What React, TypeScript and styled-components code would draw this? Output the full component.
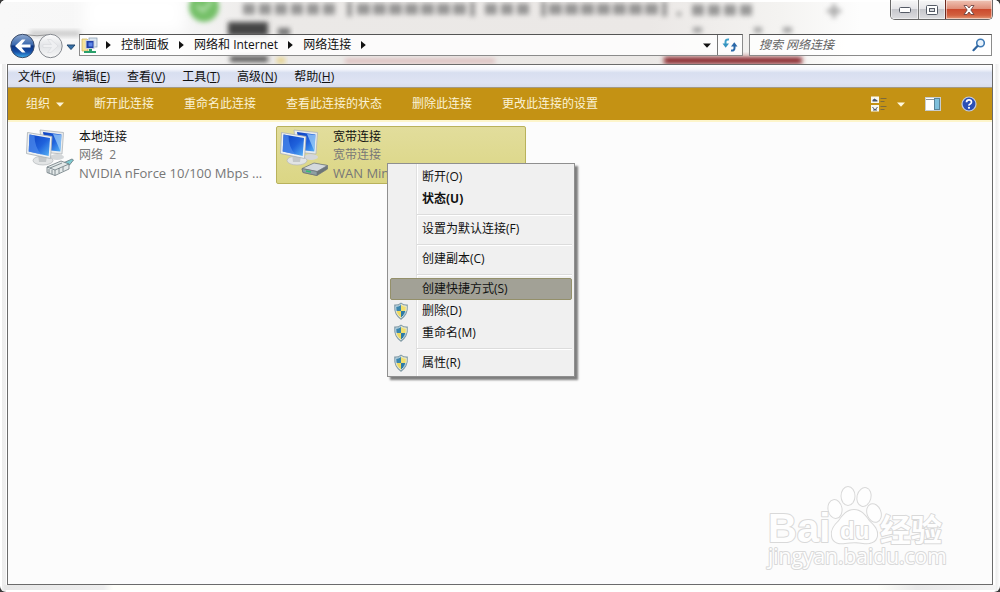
import React from "react";
import styled, { createGlobalStyle, css } from "styled-components";

const Global = createGlobalStyle`
  *, *::before, *::after { box-sizing: border-box; }
  body { margin: 0; background: #3a3a3a; }
  body, button, input {
    font-family: "Open Sans", "Noto Sans CJK SC", sans-serif;
    font-size: 12px;
    line-height: 18px;
    color: #111;
  }
  button { border: 0; padding: 0; background: none; }
  svg { display: block; }
`;

const Window = styled.main`
  position: relative;
  display: flex;
  flex-direction: column;
  min-height: 100vh;
  padding: 0 7px 7px;
  border-radius: 6px;
  overflow: hidden;
  background: linear-gradient(90deg, #fff 2px, #ececec 2px, #f0f0f0 6px, #fff 6px, #fff calc(100% - 5px), #ececec calc(100% - 4px), #fff);
`;

const Glass = styled.svg`
  position: absolute;
  top: 0;
  left: 0;
  width: 100%;
  height: 64px;
`;

const BottomGlass = styled.div`
  position: absolute;
  left: 4px;
  right: 4px;
  bottom: 2px;
  height: 5px;
  background: linear-gradient(90deg, #e8e8e8, #eee 10%, #fffffa 11%, #fffffa 88%, #e9e9e9 92%, #f4f4f4);
`;

const TitleBar = styled.header`
  position: relative;
  display: flex;
  justify-content: flex-end;
  height: 34px;
`;

const CaptionGroup = styled.div`
  display: flex;
  height: 20px;
  border: 1px solid #686868;
  border-top: 0;
  border-radius: 0 0 5px 5px;
  overflow: hidden;
`;

const CaptionButton = styled.button<{ $close?: boolean }>`
  display: grid;
  place-items: center;
  width: ${(p) => (p.$close ? 47 : 27)}px;
  background: linear-gradient(#f7f7f7, #e6e6e9 45%, #c6c7cc 50%, #dddde0);
  border-left: 1px solid #777;
  box-shadow: inset 0 0 0 1px rgba(255, 255, 255, 0.5);
  &:first-child { border-left: 0; }
  ${(p) =>
    p.$close &&
    css`
      background: linear-gradient(#efc4b6, #e08f7a 45%, #cb4a2e 50%, #d2603f 80%, #e69a78);
      border-color: #6d2a20;
    `}
`;

const NavRow = styled.div`
  position: relative;
  display: flex;
  align-items: center;
  height: 22px;
  margin-bottom: 8px;
  padding: 0 1px 0 3px;
`;

const HistoryButtons = styled.div`
  display: flex;
  align-items: center;
  width: 69px;
`;

const AddressBar = styled.div`
  flex: 1;
  display: flex;
  height: 22px;
  background: rgba(255, 255, 255, 0.82);
  border: 1px solid #8b8b8b;
  border-top-color: #555;
`;

const Crumbs = styled.nav`
  flex: 1;
  display: flex;
  align-items: center;
  gap: 10px;
  padding-left: 1px;
`;

const CrumbLink = styled.a`
  color: #111;
  text-decoration: none;
  white-space: nowrap;
`;

const FolderIcon = styled.span`
  margin-right: -2px;
`;

const AddressButton = styled.button<{ $divided?: boolean }>`
  display: grid;
  place-items: center;
  width: ${(p) => (p.$divided ? 25 : 20)}px;
  border-left: ${(p) => (p.$divided ? "1px solid #777" : "0")};
`;

const SearchBox = styled.form`
  display: flex;
  align-items: center;
  width: 243px;
  height: 22px;
  margin-left: 6px;
  padding: 0 5px 0 8px;
  background: rgba(255, 255, 255, 0.82);
  border: 1px solid #8b8b8b;
  border-top-color: #555;
`;

const SearchInput = styled.input`
  flex: 1;
  min-width: 0;
  height: 18px;
  padding: 0 0 0 1px;
  border: 0;
  outline: 0;
  background: none;
  font-style: italic;
  &::placeholder { color: #666; opacity: 1; }
`;

const Client = styled.div`
  position: relative;
  flex: 1;
  display: flex;
  flex-direction: column;
  border: 1px solid #6b6b6b;
  background: #fcfcfc;
`;

const MenuBar = styled.div`
  display: flex;
  align-items: center;
  gap: 17px;
  height: 23px;
  padding: 2px 10px 0;
  background: linear-gradient(#fff, #f3f5fb 20%, #d8dff0 35%, #dfe3f3 80%, #d9ddea);
  border-bottom: 1px solid #a39a86;
`;

const MenuButton = styled.button`
  white-space: nowrap;
`;

const CommandBar = styled.div`
  display: flex;
  align-items: center;
  gap: 30px;
  height: 32px;
  padding: 0 15px 0 18px;
  background: #c49214;
`;

const Command = styled.button`
  display: flex;
  align-items: center;
  gap: 6px;
  color: #fbf3d6;
  white-space: nowrap;
`;

const CommandIcons = styled.div`
  display: flex;
  align-items: center;
  gap: 20px;
  margin-left: auto;
`;

const ViewButton = styled(Command)`
  gap: 10px;
`;

const Content = styled.section`
  position: relative;
  flex: 1;
  padding: 4px 14px;
  border-top: 2px solid #fdf5cb;
`;

const Tiles = styled.div`
  display: flex;
  flex-wrap: wrap;
  gap: 4px;
`;

const Tile = styled.button<{ $selected?: boolean }>`
  display: flex;
  width: 250px;
  height: 58px;
  padding: 0 2px 0 3px;
  border: 1px solid transparent;
  border-radius: 2px;
  text-align: left;
  ${(p) =>
    p.$selected &&
    css`
      background: linear-gradient(#e2dd9c, #dbd684);
      border-color: #b9b25c;
    `}
`;

const TileText = styled.span`
  display: flex;
  flex-direction: column;
  min-width: 0;
  margin-left: 5px;
  padding-top: 1px;
`;

const TileLine = styled.span<{ $muted?: boolean; $wide?: boolean }>`
  overflow: hidden;
  white-space: pre;
  text-overflow: ellipsis;
  font-size: ${(p) => (p.$wide ? 13 : 12)}px;
  color: ${(p) => (p.$muted ? "#777" : "#111")};
`;

const ContextMenu = styled.div`
  position: absolute;
  top: 41px;
  left: 379px;
  width: 188px;
  padding: 2px;
  border: 1px solid #8f8f8f;
  background: linear-gradient(90deg, #f0f0f0 28px, #e0e0e0 28px, #e0e0e0 29px, #fff 29px, #fff 30px, #f0f0f0 30px);
  box-shadow: 3px 3px 2px rgba(0, 0, 0, 0.5);
`;

const MenuItem = styled.button<{ $strong?: boolean; $active?: boolean }>`
  display: flex;
  align-items: center;
  width: 100%;
  height: 22px;
  padding-left: 2px;
  border: 1px solid transparent;
  border-radius: 2px;
  font-weight: ${(p) => (p.$strong ? 700 : 400)};
  text-align: left;
  ${(p) =>
    p.$active &&
    css`
      background: #a2a196;
      border-color: #94906a;
    `}
`;

const MenuIcon = styled.span`
  width: 29px;
`;

const Separator = styled.hr`
  height: 2px;
  margin: 4px 0 2px 27px;
  border: 0;
  border-top: 1px solid #dcdcdc;
  border-bottom: 1px solid #fff;
`;

const Watermark = styled.svg`
  position: absolute;
  right: 44px;
  bottom: 10px;
`;

const Triangle = ({ right, color = "#111" }: { right?: boolean; color?: string }) =>
  right ? (
    <svg width="5" height="8" viewBox="0 0 5 8" aria-hidden="true">
      <path d="M0 0L4.800 4L0 8Z" fill={color} />
    </svg>
  ) : (
    <svg width="8" height="5" viewBox="0 0 8 5" aria-hidden="true">
      <path d="M0 0.500H8L4 4.800Z" fill={color} />
    </svg>
  );

const BackdropGlass = () => (
  <Glass aria-hidden="true">
    <defs>
      <filter id="soft" x="-30%" y="-60%" width="160%" height="220%"><feGaussianBlur stdDeviation="2.600" /></filter>
      <filter id="softer" x="-30%" y="-60%" width="160%" height="220%"><feGaussianBlur stdDeviation="7" /></filter>
      <filter id="softLine" filterUnits="userSpaceOnUse" x="200" y="-10" width="600" height="50"><feGaussianBlur stdDeviation="2.400" /></filter>
      <linearGradient id="haze" x1="0" x2="1" y1="0" y2="0">
        <stop offset="0" stopColor="#f8f8f8" />
        <stop offset="0.180" stopColor="#f6f6f6" />
        <stop offset="0.270" stopColor="#ebe9e7" />
        <stop offset="0.650" stopColor="#ebe8e6" />
        <stop offset="0.780" stopColor="#f4f3f1" />
        <stop offset="0.860" stopColor="#fdfdfd" />
      </linearGradient>
    </defs>
    <rect width="100%" height="64" fill="url(#haze)" />
    <rect x="84" y="-6" width="100" height="38" fill="#fff" filter="url(#softer)" />
    <rect x="30" y="31" width="50" height="5" fill="#c4c4c4" filter="url(#soft)" />
    <circle cx="204" cy="7" r="15" fill="#74c068" filter="url(#soft)" />
    <path d="M197 6l6 5 9-10" fill="none" stroke="#b5e0ae" strokeWidth="3" filter="url(#soft)" />
    <rect x="228" y="22" width="40" height="14" fill="#444" filter="url(#soft)" />
    <rect x="278" y="28" width="12" height="8" fill="#777" filter="url(#soft)" />
    <rect x="230" y="56" width="38" height="6" fill="#555" filter="url(#soft)" />
    <rect x="277" y="58" width="8" height="5" fill="#e6cf7a" filter="url(#soft)" />
    <g fill="none" stroke="#777" strokeWidth="11" opacity="0.720" filter="url(#softLine)">
      <path d="M243 9H337" strokeDasharray="12 4" />
      <path d="M347 9H352M470 9H475M541 9H546M662 9H667" strokeWidth="15" />
      <path d="M357 9H467" strokeDasharray="13 3" />
      <path d="M485 9H531" strokeDasharray="12 4" />
      <path d="M549 9H659" strokeDasharray="13 3" />
      <path d="M677 14H681" strokeWidth="4" />
      <path d="M692 10H752" strokeDasharray="12 4" />
    </g>
    <rect x="345" y="59" width="150" height="4" fill="#d9b4b4" filter="url(#soft)" />
    <rect x="664" y="57" width="138" height="7" fill="#862228" filter="url(#soft)" />
    <path d="M693 30H702M754 30H762M783 30H792" stroke="#999" strokeWidth="5" filter="url(#softLine)" />
    <path d="M834 4v14M827 11h14" stroke="#aaa" strokeWidth="4" filter="url(#soft)" />
    <rect width="100%" height="2" fill="#fff" />
  </Glass>
);

const NavArrows = () => (
  <svg width="69" height="28" viewBox="0 -2 69 28" aria-hidden="true">
    <defs>
      <linearGradient id="orb" x1="0" y1="0" x2="0" y2="1">
        <stop offset="0" stopColor="#8fa9cf" />
        <stop offset="0.450" stopColor="#3a68ad" />
        <stop offset="0.500" stopColor="#0d3482" />
        <stop offset="0.750" stopColor="#174fa6" />
        <stop offset="1" stopColor="#3fb0ee" />
      </linearGradient>
      <linearGradient id="orbOff" x1="0" y1="0" x2="0" y2="1">
        <stop offset="0" stopColor="#fdfdfd" />
        <stop offset="0.500" stopColor="#e2e4e7" />
        <stop offset="1" stopColor="#f7f7f7" />
      </linearGradient>
    </defs>
    <path d="M13 1.500Q27 4 41 1.500" fill="none" stroke="#999" />
    <circle cx="12.500" cy="13" r="11.700" fill="url(#orb)" stroke="#3c4d6b" />
    <path d="M5 13l7-6.500h3.500L11.500 11.500H20.500v3h-9L15.500 19.500H12z" fill="#fff" />
    <circle cx="40.500" cy="13" r="11.700" fill="url(#orbOff)" stroke="#85898f" />
    <path d="M48 13l-7-6.500h-3.500L41.500 11.500H33v3h8.500L37.500 19.500H41z" fill="#eff0f2" stroke="#d2d5d9" strokeWidth="0.500" />
    <path d="M57 12h8L61 16.500z" fill="#3570a8" stroke="#24496f" />
  </svg>
);

const NetworkFolder = () => (
  <svg width="17" height="17" viewBox="0 0 17 17" aria-hidden="true">
    <path d="M1 2h5l1 1v11H1z" fill="#f6e39a" stroke="#c9b05c" strokeWidth="0.700" />
    <rect x="8" y="1" width="8" height="9" fill="#dde8f2" stroke="#8397ad" strokeWidth="0.700" />
    <rect x="5" y="3.500" width="8" height="8" fill="#1f3fa8" stroke="#c8d2e0" />
    <path d="M7.500 5.500h4v4h-4z" fill="#5c86e8" />
    <path d="M8 12h3v2h4v2H3v-2h5z" fill="#2ba06b" />
  </svg>
);

const RefreshIcon = () => (
  <svg width="16" height="14" viewBox="0 0 16 14" aria-hidden="true">
    <path d="M7 1.500Q3.500 1 3.500 4v3" fill="none" stroke="#3fa0c9" strokeWidth="2" />
    <path d="M0.500 5.500h6.500L3.700 9.800z" fill="#3593c0" />
    <path d="M9 12.500q3.500 .5 3.500-2.500V7" fill="none" stroke="#2b68a8" strokeWidth="2" />
    <path d="M9 8.500h6.500l-3.200-4.300z" fill="#2b68a8" />
  </svg>
);

const Magnifier = () => (
  <svg width="14" height="14" viewBox="0 0 14 14" aria-hidden="true">
    <circle cx="8.500" cy="5" r="3.800" fill="#e9f3fc" stroke="#3f7ab5" strokeWidth="1.600" />
    <path d="M5.500 8L1.500 12.200" stroke="#2f649e" strokeWidth="2.200" strokeLinecap="round" />
  </svg>
);

const ComputerIcon = ({ kind }: { kind: "plug" | "modem" }) => (
  <svg width="48" height="50" viewBox="0 0 48 50" aria-hidden="true">
    <defs>
      <linearGradient id="screen" x1="0" y1="0" x2="1" y2="1">
        <stop offset="0" stopColor="#0b3fc0" />
        <stop offset="0.550" stopColor="#1f62dc" />
        <stop offset="1" stopColor="#58b4f6" />
      </linearGradient>
    </defs>
    <ellipse cx="31" cy="30" rx="7" ry="3" fill="#d4d7d9" />
    <path d="M14 3L37.500 5.500 36 27 16 25z" fill="#e8ebed" stroke="#aeb4b8" strokeWidth="0.800" />
    <path d="M17 5L35.500 7.500 34.300 24.500 20 23z" fill="url(#screen)" />
    <path d="M27 7l8.500 1-1.200 16z" fill="#a7d5fb" opacity="0.700" />
    <ellipse cx="17" cy="33.500" rx="10" ry="4.500" fill="#e2e4e5" stroke="#b5b9bb" strokeWidth="0.700" />
    <path d="M12 27l9 2-1 6h-7z" fill="#c3c7c9" />
    <path d="M1.500 5.500L26 9.500 24.500 31.500 0.500 26.500z" fill="#edf0f2" stroke="#aab0b4" strokeWidth="0.800" />
    <path d="M3.500 7.500L24 11 22.700 29 2.700 24.500z" fill="url(#screen)" />
    <path d="M3.500 7.500l5 .9q0 12 7 19l-12.800-2.900z" fill="#4f8cec" opacity="0.700" />
    {kind === "plug" ? (
      <g stroke="#69777d" strokeWidth="0.800">
        <path d="M37 36l9-4 1.500 1-4 5-5 2z" fill="#7ecbd2" />
        <path d="M21 40l14-6 8 3v5l-14 6.500-8-3z" fill="#e4eaea" />
        <path d="M21 40l8 3v5.500M29 43l14-6M24 41l12-5M23 42v4M26 43v4M33 41v5M37 40v4" fill="none" />
      </g>
    ) : (
      <g stroke="#6d7478" strokeWidth="0.700">
        <path d="M22 42l12-5.500 13.500 2v3.500L37 48.500l-14-3z" fill="#6d7679" />
        <path d="M22 41.500l12-5.500 13.500 2.500-10.500 6z" fill="#d4d9dc" />
        <path d="M22 41.500l15 3v4l-14-3z" fill="#8ea0a3" />
        <path d="M26 44l5 1" stroke="#35bd73" strokeWidth="1.500" />
      </g>
    )}
  </svg>
);

const Shield = () => (
  <svg width="16" height="18" viewBox="0 0 16 16" preserveAspectRatio="none" aria-hidden="true">
    <clipPath id="shieldShape"><path d="M8 1.500Q10.500 3.500 14 3.200Q14.500 11 8 15Q1.500 11 2 3.200Q5.500 3.500 8 1.500z" /></clipPath>
    <g clipPath="url(#shieldShape)">
      <rect width="8" height="8" fill="#3c86ad" />
      <rect x="8" width="8" height="8" fill="#f2df6c" />
      <rect y="8" width="8" height="8" fill="#f0d95c" />
      <rect x="8" y="8" width="8" height="8" fill="#2f7ba5" />
    </g>
    <path d="M8 1Q10.500 3 14.300 2.800Q15 11.200 8 15.300Q1 11.200 1.700 2.800Q5.500 3 8 1z" fill="none" stroke="#7f99a5" />
    <path d="M8 2.200Q10.500 4 13.300 3.900Q13.500 10.700 8 14.100Q2.500 10.700 2.700 3.900Q5.500 4 8 2.200z" fill="none" stroke="#dfe9ec" strokeWidth="0.800" />
  </svg>
);

const BaiduWatermark = () => (
  <Watermark width="184" height="92" viewBox="0 0 184 92" role="img" aria-label="Baidu 经验">
    <g fill="#fefefe" stroke="#d9d9d9" strokeWidth="2" strokeLinejoin="round" paintOrder="stroke">
      <ellipse cx="71" cy="27" rx="6.500" ry="9" transform="rotate(-10 71 27)" />
      <ellipse cx="84" cy="14" rx="6.500" ry="9" />
      <ellipse cx="100" cy="15" rx="6.500" ry="9" transform="rotate(14 100 15)" />
      <ellipse cx="110" cy="31" rx="6.500" ry="9" transform="rotate(-20 110 31)" />
      <path d="M90 28C83 28 79 33 75 39C70 44 67 48 68 54C69 61 76 62 81 61C87 60 94 60 99 61C106 62 112 60 113 54C114 47 109 43 105 39C101 33 97 28 90 28z" />
      <g fontFamily="Liberation Sans, sans-serif" fontWeight="700">
        <text x="4" y="60" fontSize="40">Bai</text>
        <text x="76" y="57" fontSize="24">du</text>
      </g>
      <text x="116" y="59" fontSize="31" fontFamily="Noto Sans CJK SC, sans-serif" fontWeight="700">经验</text>
      <text x="4" y="82" fontSize="21" fontFamily="Open Sans, sans-serif">jingyan.baidu.com</text>
    </g>
  </Watermark>
);

const menus: [string, string][] = [["文件", "F"], ["编辑", "E"], ["查看", "V"], ["工具", "T"], ["高级", "N"], ["帮助", "H"]];
const commands = ["断开此连接", "重命名此连接", "查看此连接的状态", "删除此连接", "更改此连接的设置"];
const crumbs = ["控制面板", "网络和 Internet", "网络连接"];

type Entry = { label: string; strong?: boolean; active?: boolean; shield?: boolean } | null;
const entries: Entry[] = [
  { label: "断开(O)" },
  { label: "状态(U)", strong: true },
  null,
  { label: "设置为默认连接(F)" },
  null,
  { label: "创建副本(C)" },
  null,
  { label: "创建快捷方式(S)", active: true },
  { label: "删除(D)", shield: true },
  { label: "重命名(M)", shield: true },
  null,
  { label: "属性(R)", shield: true },
];

export default function App() {
  return (
    <>
      <Global />
      <Window>
        <BackdropGlass />
        <BottomGlass />
        <TitleBar>
          <CaptionGroup>
            <CaptionButton aria-label="最小化">
              <svg width="12" height="6" viewBox="0 0 12 6"><rect x="0.500" y="0.500" width="11" height="5" rx="1" fill="#fff" stroke="#555b66" /></svg>
            </CaptionButton>
            <CaptionButton aria-label="最大化">
              <svg width="12" height="10" viewBox="0 0 12 10">
                <rect x="0.500" y="0.500" width="11" height="9" rx="1" fill="#fff" stroke="#555b66" />
                <rect x="3.500" y="3.500" width="5" height="3" fill="#d8dade" stroke="#555b66" />
              </svg>
            </CaptionButton>
            <CaptionButton $close aria-label="关闭">
              <svg width="12" height="10" viewBox="0 0 12 10">
                <path d="M1 .5h3L6 3 8 .5h3L7.800 5 11 9.500H8L6 7 4 9.500H1L4.200 5z" fill="#fff" stroke="#5f3a3a" strokeWidth="0.800" />
              </svg>
            </CaptionButton>
          </CaptionGroup>
        </TitleBar>
        <NavRow>
          <HistoryButtons><NavArrows /></HistoryButtons>
          <AddressBar>
            <Crumbs aria-label="地址">
              <FolderIcon><NetworkFolder /></FolderIcon>
              <Triangle right />
              {crumbs.map((c) => (
                <React.Fragment key={c}>
                  <CrumbLink href="#">{c}</CrumbLink>
                  <Triangle right />
                </React.Fragment>
              ))}
            </Crumbs>
            <AddressButton aria-label="历史"><Triangle /></AddressButton>
            <AddressButton $divided aria-label="刷新"><RefreshIcon /></AddressButton>
          </AddressBar>
          <SearchBox role="search">
            <SearchInput aria-label="搜索" placeholder="搜索 网络连接" />
            <Magnifier />
          </SearchBox>
        </NavRow>
        <Client>
          <MenuBar>
            {menus.map(([name, key]) => (
              <MenuButton key={key}>{name}(<u>{key}</u>)</MenuButton>
            ))}
          </MenuBar>
          <CommandBar>
            <Command>组织 <Triangle color="#fbf3d6" /></Command>
            {commands.map((c) => <Command key={c}>{c}</Command>)}
            <CommandIcons>
              <ViewButton aria-label="更改视图">
                <svg width="16" height="16" viewBox="0 0 16 16">
                  <path d="M0 0.500h8v6.500H0zM0 9h8v6.500H0z" fill="#f8f8f0" />
                  <path d="M1.500 5.500V4l2-1.500 3 2v1z" fill="#4a5568" />
                  <path d="M1.500 11l2.500 3 2.500-3M2 14h4" fill="none" stroke="#4a5568" />
                  <path d="M9.500 2.500h6M9.500 5.500h4M9.500 10.500h6M9.500 13.500h4" stroke="#7d6a3a" />
                </svg>
                <Triangle color="#fff9df" />
              </ViewButton>
              <Command aria-label="预览窗格">
                <svg width="16" height="14" viewBox="0 0 16 14">
                  <rect x="0.500" y="0.500" width="15" height="13" fill="#fff" stroke="#c7cdd0" />
                  <path d="M1 2.500h9" stroke="#8a9299" />
                  <rect x="9.500" y="1.500" width="5" height="11" fill="#7fc0dc" stroke="#5b8599" />
                </svg>
              </Command>
              <Command aria-label="帮助">
                <svg width="16" height="16" viewBox="0 0 16 16">
                  <circle cx="8" cy="8" r="7" fill="#2b4fb5" stroke="#c3cbe0" strokeWidth="1.200" />
                  <path d="M5.500 6.200Q5.600 3.800 8 3.800T10.500 6Q10.500 7.300 9.200 7.900T8 9.600" fill="none" stroke="#fff" strokeWidth="1.700" />
                  <circle cx="8" cy="11.800" r="1.100" fill="#fff" />
                </svg>
              </Command>
            </CommandIcons>
          </CommandBar>
          <Content>
            <Tiles>
              <Tile>
                <ComputerIcon kind="plug" />
                <TileText>
                  <TileLine>本地连接</TileLine>
                  <TileLine $muted>网络  2</TileLine>
                  <TileLine $muted $wide>NVIDIA nForce 10/100 Mbps ...</TileLine>
                </TileText>
              </Tile>
              <Tile $selected>
                <ComputerIcon kind="modem" />
                <TileText>
                  <TileLine>宽带连接</TileLine>
                  <TileLine $muted>宽带连接</TileLine>
                  <TileLine $muted $wide>WAN Mini...</TileLine>
                </TileText>
              </Tile>
            </Tiles>
            <BaiduWatermark />
            <ContextMenu role="menu">
              {entries.map((e, i) =>
                e ? (
                  <MenuItem key={i} role="menuitem" $strong={e.strong} $active={e.active}>
                    <MenuIcon>{e.shield && <Shield />}</MenuIcon>
                    {e.label}
                  </MenuItem>
                ) : (
                  <Separator key={i} />
                )
              )}
            </ContextMenu>
          </Content>
        </Client>
      </Window>
    </>
  );
}
